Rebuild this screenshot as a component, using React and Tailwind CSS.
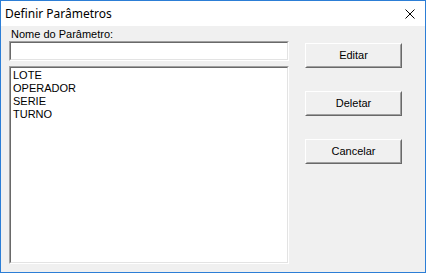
import React from 'react';

const Sunken = ({ className, children }) => (
  <div className={`border border-t-[#a0a0a0] border-l-[#a0a0a0] border-b-white border-r-white ${className}`}>
    <div className="h-full w-full border border-t-[#696969] border-l-[#696969] border-b-[#e3e3e3] border-r-[#e3e3e3] bg-white">
      {children}
    </div>
  </div>
);

const Button = ({ label }) => (
  <div className="w-[97px] h-[25px] border border-t-white border-l-white border-b-[#696969] border-r-[#696969]">
    <div className="h-full w-full border border-t-[#f0f0f0] border-l-[#f0f0f0] border-b-[#a0a0a0] border-r-[#a0a0a0] bg-[#f0f0f0] flex items-center justify-center text-[11px] text-black">
      {label}
    </div>
  </div>
);

const App = () => {
  const params = ['LOTE', 'OPERADOR', 'SERIE', 'TURNO'];
  const buttons = ['Editar', 'Deletar', 'Cancelar'];

  return (
    <div
      className="w-[426px] h-[273px] border border-[#2c7ed6] flex flex-col bg-[#f0f0f0]"
      style={{ fontFamily: '"Liberation Sans", Arial, sans-serif' }}
    >
      <div className="h-[25px] bg-white flex items-center justify-between pl-[4px] pr-[10px] shrink-0">
        <span className="text-[12px] text-black" style={{ fontFamily: '"Noto Sans", sans-serif' }}>
          Definir Parâmetros
        </span>
        <svg width="10" height="10" viewBox="0 0 10 10">
          <path d="M0.5 0.5 L9.5 9.5 M9.5 0.5 L0.5 9.5" stroke="#000" strokeWidth="1" />
        </svg>
      </div>

      <div className="flex-1 flex pl-[8px] pt-[2px]">
        <div className="w-[280px] flex flex-col">
          <div className="h-[13px] text-[11px] leading-[13px] pl-[2px] text-black">Nome do Parâmetro:</div>
          <Sunken className="h-[20px]" />
          <Sunken className="h-[198px] mt-[5px]">
            <div className="pl-[2px] pt-[1px] text-[11px] leading-[13px] text-black">
              {params.map((p) => (
                <div key={p}>{p}</div>
              ))}
            </div>
          </Sunken>
        </div>

        <div className="ml-[16px] pt-[15px] flex flex-col gap-[23px]">
          {buttons.map((b) => (
            <Button key={b} label={b} />
          ))}
        </div>
      </div>
    </div>
  );
};

export default App;
